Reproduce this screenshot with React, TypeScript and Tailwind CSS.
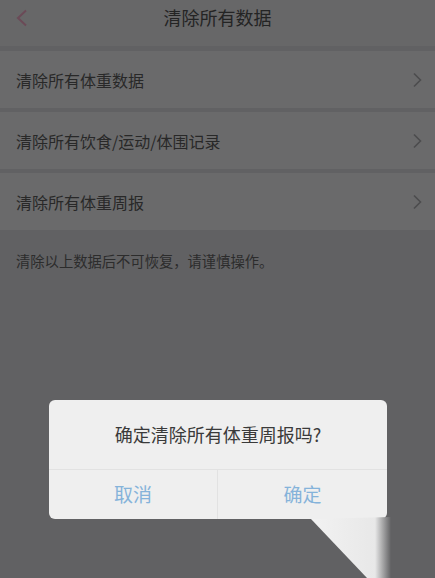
import React from "react";

const font = { fontFamily: '"Noto Sans CJK SC", "Noto Sans", sans-serif' };

const Chevron = () => (
  <svg width="10" height="16" viewBox="0 0 10 16" fill="none">
    <path d="M2 1.5 L8.5 8 L2 14.5" stroke="#4c4c4e" strokeWidth="1.6" />
  </svg>
);

const Row = ({ label }: { label: string }) => (
  <div className="flex h-[57px] items-center justify-between bg-[#6a6a6b] pl-4 pr-[13px]">
    <span className="text-[16px] text-[#282828]">{label}</span>
    <Chevron />
  </div>
);

export default function App() {
  return (
    <div className="relative h-[578px] w-[435px] overflow-hidden bg-[#616163]" style={font}>
      {/* header */}
      <div className="relative flex h-[46px] items-center justify-center bg-[#676768]">
        <svg className="absolute left-[15px] top-[9px]" width="14" height="18" viewBox="0 0 14 18" fill="none">
          <path d="M11 1.5 L3 9 L11 16.5" stroke="#6b4a57" strokeWidth="2" />
        </svg>
        <span className="-mt-[11px] text-[18px] text-[#242424]">清除所有数据</span>
      </div>

      <div className="mt-[5px] flex flex-col gap-[4px]">
        <Row label="清除所有体重数据" />
        <Row label="清除所有饮食/运动/体围记录" />
        <Row label="清除所有体重周报" />
      </div>

      <p className="pl-4 pt-[20px] text-[14.3px] text-[#2c2c2c]">清除以上数据后不可恢复，请谨慎操作。</p>

      {/* dialog */}
      <div className="absolute left-[49px] top-[400px] w-[338px] overflow-hidden rounded-[6px] bg-[#efefef]">
        <div className="flex h-[69px] items-center justify-center text-[18px] text-[#3a3a3a]">确定清除所有体重周报吗?</div>
        <div className="grid h-[50px] grid-cols-2 border-t border-[#e2e2e2]">
          <div className="flex items-center justify-center border-r border-[#e2e2e2] text-[19px] text-[#85b3da]">取消</div>
          <div className="flex items-center justify-center text-[19px] text-[#85b3da]">确定</div>
        </div>
      </div>

      {/* tail shape */}
      <svg className="absolute left-[305px] top-[517px]" width="90" height="61" viewBox="0 0 90 61">
        <defs>
          <linearGradient id="edge" x1="0" x2="1" y1="0" y2="0">
            <stop offset="0" stopColor="#f2f2f2" />
            <stop offset="0.8" stopColor="#e8e8e8" />
            <stop offset="1" stopColor="#616163" />
          </linearGradient>
        </defs>
        <polygon points="6,2 86,0 86,61 62,61" fill="url(#edge)" />
      </svg>
    </div>
  );
}
